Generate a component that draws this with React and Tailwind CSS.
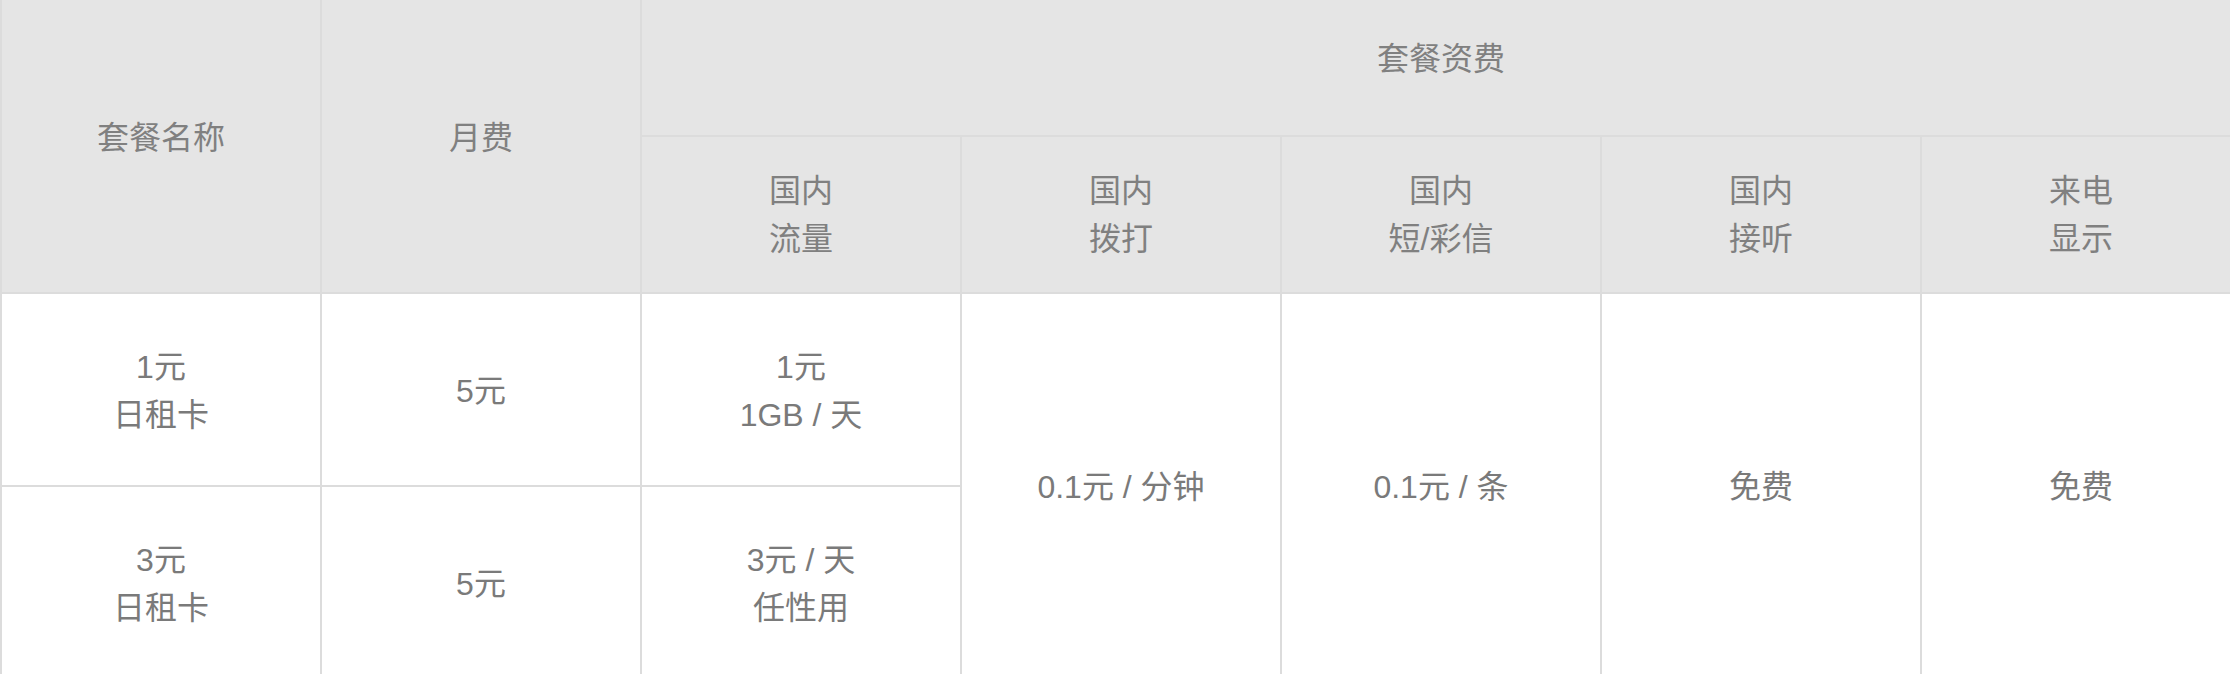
import React from "react";

const font = { fontFamily: '"Liberation Sans", "Noto Sans CJK SC", sans-serif' };

function Cell({ children, className = "" }) {
  return (
    <div
      className={`flex items-center justify-center text-center border-r-2 border-b-2 border-[#dcdcdc] text-[32px] leading-[48px] ${className}`}
    >
      <div>{children}</div>
    </div>
  );
}

function Head({ children, className = "" }) {
  return <Cell className={`bg-[#e5e5e5] text-[#808080] ${className}`}>{children}</Cell>;
}

function Body({ children, className = "" }) {
  return <Cell className={`bg-white text-[#7a7a7a] ${className}`}>{children}</Cell>;
}

export default function App() {
  return (
    <div className="w-full h-[674px] overflow-hidden bg-white" style={font}>
      <div className="-mt-[19px] w-[2242px] grid grid-cols-[repeat(7,320px)] grid-rows-[154px_157px_193px_194px] border-l-2 border-t-2 border-[#dcdcdc]">
        <Head className="row-span-2">套餐名称</Head>
        <Head className="row-span-2">月费</Head>
        <Head className="col-span-5">套餐资费</Head>

        <Head>国内<br />流量</Head>
        <Head>国内<br />拨打</Head>
        <Head>国内<br />短/彩信</Head>
        <Head>国内<br />接听</Head>
        <Head>来电<br />显示</Head>

        <Body className="pt-[2px]">1元<br />日租卡</Body>
        <Body className="pt-[2px]">5元</Body>
        <Body className="pt-[2px]">1元<br />1GB / 天</Body>
        <Body className="row-span-2">0.1元 / 分钟</Body>
        <Body className="row-span-2">0.1元 / 条</Body>
        <Body className="row-span-2">免费</Body>
        <Body className="row-span-2">免费</Body>

        <Body className="pt-[2px]">3元<br />日租卡</Body>
        <Body className="pt-[2px]">5元</Body>
        <Body className="pt-[2px]">3元 / 天<br />任性用</Body>
      </div>
    </div>
  );
}
